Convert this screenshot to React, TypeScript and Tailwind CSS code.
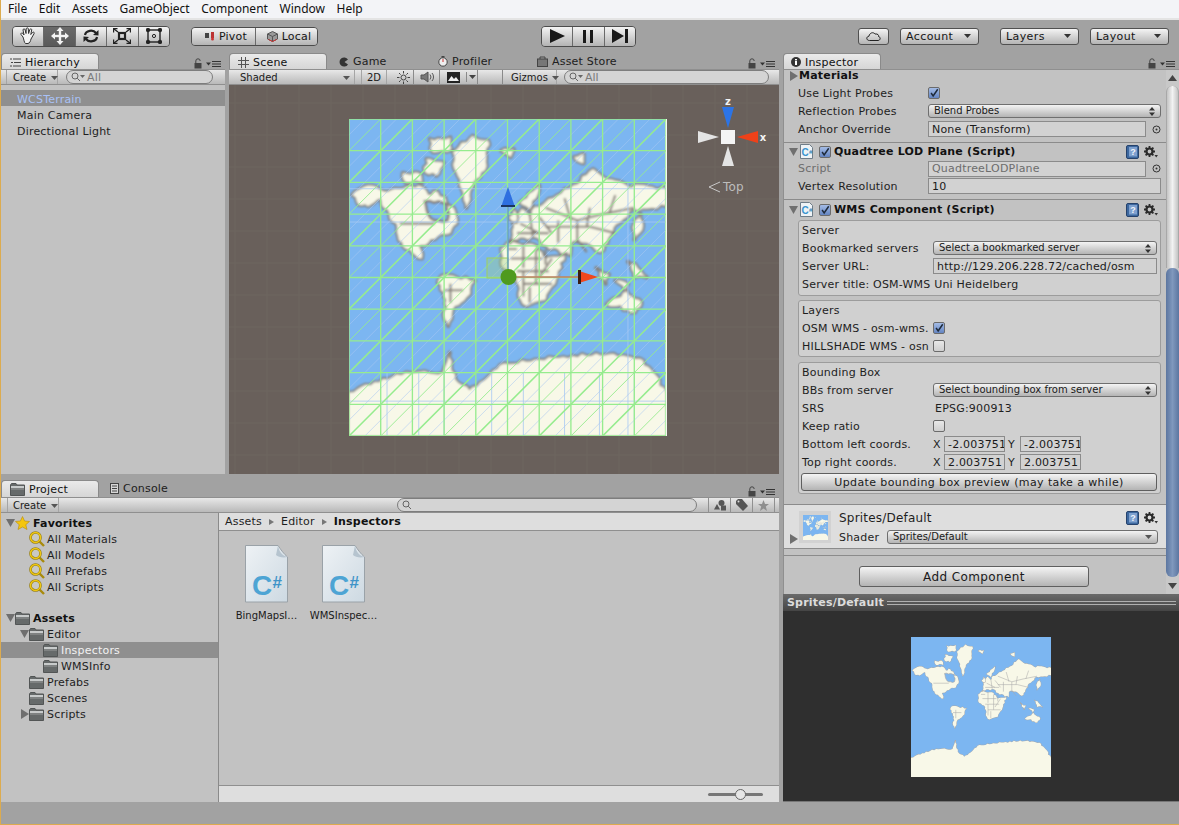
import React from "react";

const BAR = "bg-linear-to-b from-[#e8e8e8] to-[#b9b9b9]";
const BTN = "bg-linear-to-b from-[#f4f4f4] to-[#b4b4b4]";

const RAW_LAND: string[] = [
  "1,24 6,21 12,23 17,22 22,21 25,24 28,23 33,28 34,33 32,36 28,37 25,39 22,40 23,44 21,43 18,41 15.5,37 15,33 11,28 10,25 6,27.5 3,27",
  "32.8,10.5 39,5.3 43.9,6.8 43.4,14.8 39.2,20 37,28 35.5,22 33.9,16.8",
  "25.5,6.3 32,5.8 32.3,9.5 26.5,10.5",
  "24.4,12.6 29.8,13.7 27.6,17.9 24,16.8",
  "17,17 22,17 23,20 18,20",
  "29.2,49.5 33.9,50 39.7,51 37,56.3 33.4,59 31.3,65.3 30.2,63.2 30.7,57 28,51.6",
  "48,41 51,38.5 59,40 62,44 68,43 65,52 62,57 56,59 53.5,56 53,50 50,47.5 48,45",
  "57.6,29 64.4,25 70.7,21 77,15.8 80.2,18.4 87.6,21 100,22 100,27.4 89.7,28.4 85.5,32.6 82.3,36.8 79.2,42 75,39 70.7,38.4 69.7,43 62.3,40 59.2,37.4 53.9,37.4 50.7,39 51.8,32.6 54.4,28.4 57,30.5",
  "53.9,26.5 60,21 59,25 57,28.5",
  "50.5,31 52,28.5 52.8,32.5",
  "81.3,58.4 87.6,54.2 92.3,58 90.2,61 84.4,59",
  "0,86.3 10.7,82 21,80 29.7,80 31.8,73.7 33.4,82 38,85.6 47.6,77.7 60.2,76 78,74 91.7,75.6 96,80 100,86.3 100,100 0,100",
  "90,33 92,30 92.5,35 90,38",
  "78,47 82,49 81,52",
  "84,51 88,52 87,54",
  "71,12 74,11 74,14",
  "48,10 52,9.5 51,12",
  "88,45 91,47 94,50 90,50",
];

function rough(src: string, seed: number): string {
  const pts = src.split(" ").map((p) => p.split(",").map(Number));
  const out: string[] = [];
  pts.forEach((a, i) => {
    const b = pts[(i + 1) % pts.length];
    const dx = b[0] - a[0];
    const dy = b[1] - a[1];
    const len = Math.hypot(dx, dy);
    const n = Math.max(1, Math.ceil(len / 1.5));
    const edge = (a[0] === 100 && b[0] === 100) || (a[0] === 0 && b[0] === 0) || (a[1] === 100 && b[1] === 100);
    for (let k = 0; k < n; k++) {
      const t = k / n;
      const r = Math.sin((i + 1) * 12.9898 + k * 78.233 + seed * 37.7) * 43758.5453;
      const noise = (r - Math.floor(r) - 0.5) * 1.3;
      const off = k === 0 || edge ? 0 : noise;
      out.push((a[0] + dx * t - (dy / len) * off).toFixed(2) + "," + (a[1] + dy * t + (dx / len) * off).toFixed(2));
    }
  });
  return out.join(" ");
}

const LAND = RAW_LAND.map((p, i) => rough(p, i + 1));
const HUDSON = rough("24,26 31,27 31,32 27,32 25,30", 40);

const BORDERS =
  "M51,44 H61 M53,48 H63 M55,52 H64 M55,40 V47 M59,41 V52 M55,48 V56 M62,28 L72,32 L80,30 L90,28 M62,34 H76 M66,32 V39 M72,32 V39 M16,33 H27 M30,54 L36,54 M32,52 V58 M76,34 L84,36 M72,38 L75,42 M54,33 L60,36 M57,30 L58,37 M60,31 L64,36 M53,36 H63 M68,25 L70,32 M50,41 H53 M62,41 V46 M64,44 L60,50 M57,53 V58 M76,28 L75,34 M84,24 L82,30";

function WorldMap({ x = 0, y = 0, size, stroke, outline, blur }: { x?: number; y?: number; size: number; stroke: number; outline: string; blur?: boolean }) {
  return (
    <svg x={x} y={y} width={size} height={size} viewBox="0 0 100 100">
      <rect width="100" height="100" fill="#7cb6f1" />
      <g filter={blur ? "url(#mapBlur)" : undefined}>
        {LAND.map((p, i) => (
          <polygon key={i} points={p} fill="#f8f8e8" stroke={outline} strokeWidth={stroke} strokeLinejoin="round" paintOrder="stroke" />
        ))}
        <polygon points={HUDSON} fill="#7cb6f1" stroke={outline} strokeWidth={stroke * 0.7} />
        <path d={BORDERS} fill="none" stroke={outline} strokeWidth={stroke * 0.55} />
      </g>
    </svg>
  );
}

function Wire({ x, y, size }: { x: number; y: number; size: number }) {
  const rng = Array.from({ length: 11 }, (_, i) => i * 10);
  const fine = Array.from({ length: 20 }, (_, i) => i * 10 + 5);
  const blueV = [12, 22, 30, 45, 55, 68, 79, 90];
  return (
    <svg x={x} y={y} width={size} height={size} viewBox="0 0 100 100" fill="none">
      <g stroke="#a8c8f2" strokeWidth="0.25">
        {blueV.map((v) => (
          <line key={v} x1={v} y1="80" x2={v} y2="100" />
        ))}
        <line x1="0" y1="22" x2="100" y2="22" />
        <line x1="0" y1="32.5" x2="100" y2="32.5" />
        <line x1="0" y1="89" x2="100" y2="89" />
        <line x1="88" y1="20" x2="88" y2="100" />
        {fine.map((k) => (
          <line key={k} x1={Math.max(0, k - 100)} y1={Math.min(100, k)} x2={Math.min(100, k)} y2={Math.max(0, k - 100)} strokeWidth="0.18" />
        ))}
      </g>
      <g stroke="#96ec8e">
        {Array.from({ length: 19 }, (_, i) => (i + 1) * 10).map((k) => (
          <line key={k} x1={Math.max(0, k - 100)} y1={Math.min(100, k)} x2={Math.min(100, k)} y2={Math.max(0, k - 100)} strokeWidth={k % 20 === 0 ? 0.5 : 0.28} />
        ))}
        {rng.map((v) => (
          <g key={v} strokeWidth="0.42">
            <line x1={v} y1="0" x2={v} y2="100" />
            <line x1="0" y1={v} x2="100" y2={v} />
          </g>
        ))}
      </g>
    </svg>
  );
}

function SceneDrawing() {
  const gridV = [6, 38, 70, 102, 134, 166, 198, 230, 262, 294, 326, 358, 390, 422, 454, 486, 518];
  const gridH = [18, 50, 82, 114, 146, 178, 210, 242, 274, 306, 338, 370];
  return (
    <svg width="550" height="389" className="block">
      <defs>
        <filter id="mapBlur" x="-5%" y="-5%" width="110%" height="110%">
          <feGaussianBlur stdDeviation="0.3" />
        </filter>
      </defs>
      <g stroke="#6f6660" strokeWidth="1">
        {gridV.map((v) => (
          <line key={v} x1={v} y1="0" x2={v} y2="389" />
        ))}
        {gridH.map((v) => (
          <line key={v} x1="0" y1={v} x2="550" y2={v} />
        ))}
      </g>
      <WorldMap x={120} y={34} size={317} stroke={1.2} outline="#857f78" blur />
      <rect x="436" y="34" width="2" height="317" fill="#f3f7ee" />
      <Wire x={120} y={34} size={317} />
      <rect x="258" y="173" width="21" height="20" fill="#9fd27a" fillOpacity="0.35" stroke="#9fcf5e" />
      <line x1="279" y1="120" x2="279" y2="192" stroke="#5f8fd0" strokeWidth="1.2" />
      <polygon points="279,102 272,122 286,122" fill="#2e6fe0" />
      <rect x="272" y="120" width="14" height="2" fill="#1c3562" />
      <line x1="279" y1="192" x2="351" y2="192" stroke="#c27e62" strokeWidth="1.4" />
      <polygon points="369,192 350,186 350,198" fill="#f0471e" />
      <rect x="349" y="185" width="3" height="14" fill="#3a1c14" />
      <circle cx="279.5" cy="192" r="8" fill="#4f9a1e" />
      <polygon points="499,43 493,22 505,22" fill="#2c74e6" />
      <polygon points="508,52 529,46 529,58" fill="#ee4119" />
      <polygon points="490,52 469,46 469,58" fill="#e4e4e4" />
      <polygon points="499,61 493,81 505,81" fill="#e4e4e4" />
      <rect x="492" y="45" width="14" height="14" fill="#f4f4f4" />
      <text x="499" y="20" textAnchor="middle" fontSize="10" fontWeight="bold" fill="#f4f4f4" fontFamily="'DejaVu Sans',sans-serif">z</text>
      <text x="534" y="56" textAnchor="middle" fontSize="10" fontWeight="bold" fill="#f4f4f4" fontFamily="'DejaVu Sans',sans-serif">x</text>
      <path d="M491,97 L480,102 L491,107" fill="none" stroke="#c9c9c9" strokeWidth="1" />
      <text x="494" y="102" fontSize="12" dominantBaseline="middle" fill="#bdbdbd" fontFamily="'DejaVu Sans',sans-serif">Top</text>
    </svg>
  );
}

const Arrow = ({ dir = "down", className = "" }: { dir?: "down" | "right"; className?: string }) => (
  <svg width="9" height="10" viewBox="0 0 9 10" className={"shrink-0 " + className}>
    {dir === "down" ? <polygon points="0,1 9,1 4.5,9" fill="#6f6f6f" /> : <polygon points="1,0 9,5 1,10" fill="#6f6f6f" />}
  </svg>
);

const Caret = ({ color = "#333" }: { color?: string }) => (
  <svg width="7" height="4" viewBox="0 0 7 4" className="shrink-0">
    <polygon points="0,0 7,0 3.5,4" fill={color} />
  </svg>
);

const UpDown = () => (
  <svg width="6" height="9" viewBox="0 0 6 9" className="shrink-0">
    <polygon points="3,0 6,3.5 0,3.5" fill="#333" />
    <polygon points="0,5.5 6,5.5 3,9" fill="#333" />
  </svg>
);

function LockMenu() {
  return (
    <div className="ml-auto flex items-center gap-[4px] pr-[4px] pt-[3px]">
      <svg width="8" height="11" viewBox="0 0 8 11">
        <path d="M1.8,5 V3 a2.2,2.2 0 0 1 4.4,0" fill="none" stroke="#444" strokeWidth="1" />
        <rect x="0.5" y="5" width="7" height="5.5" fill="#444" />
      </svg>
      <svg width="15" height="8" viewBox="0 0 15 8">
        <polygon points="0,2.5 5,2.5 2.5,5.5" fill="#333" />
        <path d="M6,1.5 H15 M6,4 H15 M6,6.5 H15" stroke="#333" strokeWidth="1" />
      </svg>
    </div>
  );
}

function Tab({ icon, label, active, w = "w-[98px]", pl = "pl-[8px]", h = "h-[16px] pt-px" }: { icon: React.ReactNode; label: string; active?: boolean; w?: string; pl?: string; h?: string }) {
  return (
    <div className={(active ? "bg-linear-to-b from-[#eaeaea] to-[#d6d6d6] rounded-t-[4px] border-t border-x border-[#8a8a8a] text-[#111]" : "text-[#202020]") + " " + w + " " + pl + " " + h + " flex items-center gap-[4px] shrink-0 text-[11px]"}>
      {icon}
      <span>{label}</span>
    </div>
  );
}

const ListIcon = () => (
  <svg width="11" height="9" viewBox="0 0 11 9">
    <path d="M3,1 H11 M4,4.5 H11 M3,8 H11" stroke="#444" fill="none" />
    <path d="M0,1 H2 M1,4.5 H3 M0,8 H2" stroke="#444" fill="none" />
  </svg>
);
const HashIcon = () => (
  <svg width="11" height="11" viewBox="0 0 11 11">
    <path d="M3.5,0 V11 M7.5,0 V11 M0,3.5 H11 M0,7.5 H11" stroke="#555" fill="none" />
  </svg>
);
const GameIcon = () => (
  <svg width="10" height="10" viewBox="0 0 10 10">
    <path d="M9,2.5 A4.6,4.6 0 1 0 9,7.5 L5.5,5 Z" fill="#333" />
  </svg>
);
const ProfilerIcon = () => (
  <svg width="10" height="11" viewBox="0 0 10 11">
    <circle cx="5" cy="6" r="4.2" fill="#eee" stroke="#444" />
    <path d="M5,6 L5,3" stroke="#c33" />
    <rect x="3.5" y="0" width="3" height="1.6" fill="#444" />
  </svg>
);
const StoreIcon = () => (
  <svg width="11" height="11" viewBox="0 0 11 11">
    <rect x="0.5" y="3" width="10" height="7.5" fill="#777" stroke="#444" />
    <path d="M3,3 V1 H8 V3" fill="none" stroke="#444" />
  </svg>
);
const InfoIcon = () => (
  <svg width="10" height="10" viewBox="0 0 10 10">
    <circle cx="5" cy="5" r="5" fill="#333" />
    <rect x="4" y="4" width="2" height="4" fill="#fff" />
    <rect x="4" y="2" width="2" height="1.4" fill="#fff" />
  </svg>
);
const FolderIcon = () => (
  <svg width="15" height="13" viewBox="0 0 15 13" className="shrink-0">
    <path d="M0.5,2 L1.5,0.5 H6 L7,2 H14.5 V12.5 H0.5 Z" fill="#666a6a" stroke="#525555" />
    <rect x="1" y="3" width="13" height="2" fill="#c8cbcb" />
    <rect x="1" y="5.5" width="13" height="1" fill="#979a9a" />
  </svg>
);
const ConsoleIcon = () => (
  <svg width="9" height="11" viewBox="0 0 9 11">
    <rect x="0.5" y="0.5" width="8" height="10" fill="#d8d8d8" stroke="#444" />
    <path d="M2,3 H7 M2,5.5 H7 M2,8 H7" stroke="#444" />
  </svg>
);
const SearchGlyph = ({ caret = true }: { caret?: boolean }) => (
  <svg width={caret ? 15 : 10} height="10" viewBox={caret ? "0 0 15 10" : "0 0 10 10"} className="shrink-0">
    <circle cx="4" cy="4" r="3" fill="none" stroke="#666" />
    <path d="M6.2,6.2 L9,9" stroke="#666" />
    {caret && <polygon points="9,3 14,3 11.5,6" fill="#666" />}
  </svg>
);
const Star = () => (
  <svg width="15" height="14" viewBox="0 0 15 14" className="shrink-0">
    <polygon points="7.5,0.5 9.6,5 14.5,5.5 10.8,8.7 12,13.5 7.5,11 3,13.5 4.2,8.7 0.5,5.5 5.4,5" fill="#f4c60e" stroke="#b98d08" strokeWidth="0.6" />
  </svg>
);
const Magnifier = () => (
  <svg width="16" height="16" viewBox="0 0 16 16" className="shrink-0">
    <circle cx="6.5" cy="6.5" r="5" fill="#dcdcc8" fillOpacity="0.3" stroke="#8f7a1a" strokeWidth="2.6" />
    <circle cx="6.5" cy="6.5" r="5" fill="none" stroke="#f0c811" strokeWidth="1.5" />
    <path d="M10.5,10.5 L15,15" stroke="#a88a0c" strokeWidth="2.4" />
  </svg>
);

function TreeRow({ depth, arrow, icon, text, selected, bold }: { depth: number; arrow?: "down" | "right"; icon: React.ReactNode; text: string; selected?: boolean; bold?: boolean }) {
  return (
    <div className={"h-[16px] flex items-center " + (selected ? "bg-[#8f8f8f] text-[#f2f2f2] " : "text-[#1e1e1e] ") + (bold ? "font-bold text-[#111]" : "")}>
      <div style={{ width: 5 + depth * 14 }} className="shrink-0" />
      <div className="w-[9px] shrink-0">{arrow && <Arrow dir={arrow} />}</div>
      <div className="w-[15px] shrink-0 flex justify-center">{icon}</div>
      <span className="ml-[3px]">{text}</span>
    </div>
  );
}

function CSharpFile({ label }: { label: string }) {
  return (
    <div className="w-[77px] flex flex-col items-center">
      <svg width="43" height="58" viewBox="0 0 43 58">
        <defs>
          <linearGradient id="pg" x1="0" y1="0" x2="1" y2="1">
            <stop offset="0" stopColor="#eef2f5" />
            <stop offset="1" stopColor="#cdd9e2" />
          </linearGradient>
        </defs>
        <path d="M0.5,0.5 H33 C36,5 39,9 42.5,12 V57 H0.5 Z" fill="url(#pg)" stroke="#9aa2a8" />
        <path d="M33,0.5 C34,6 36,10 42.5,12 C38,13 33,12 31,10 Z" fill="#b6c4cf" />
        <text x="7" y="50" fontFamily="'Liberation Sans',sans-serif" fontWeight="bold" fill="#4da4d4">
          <tspan fontSize="28">C</tspan>
          <tspan fontSize="17" dy="-7" fill="#3f94c8">#</tspan>
        </text>
      </svg>
      <span className="mt-[6px] text-[10px] leading-[14px] tracking-normal whitespace-nowrap text-[#1a1a1a]">{label}</span>
    </div>
  );
}

const Check = ({ on, className = "" }: { on?: boolean; className?: string }) => (
  <div className={"w-[12px] h-[12px] rounded-[2px] border border-[#6b6b6b] shrink-0 flex items-center justify-center " + (on ? "bg-linear-to-b from-[#a4bce6] to-[#6485c2] " : "bg-linear-to-b from-[#e8e8e8] to-[#cfcfcf] ") + className}>
    {on && (
      <svg width="12" height="12" viewBox="0 0 12 12">
        <path d="M2.5,6 L5,9.5 L10.5,1.5" fill="none" stroke="#1e2a3a" strokeWidth="1.8" />
      </svg>
    )}
  </div>
);

const Row = ({ label, w = "w-[130px]", dim, children, h = "h-[18px]" }: { label: string; w?: string; dim?: boolean; children?: React.ReactNode; h?: string }) => (
  <div className={h + " flex items-center"}>
    <span className={w + " shrink-0 whitespace-nowrap " + (dim ? "text-[#6d6d6d]" : "text-[#1e1e1e]")}>{label}</span>
    {children}
  </div>
);

const BRow = (p: { label: string; children?: React.ReactNode }) => <Row {...p} w="w-[131px]" />;

const Dropdown = ({ text, icon = <UpDown />, cls = "flex-1" }: { text: string; icon?: React.ReactNode; cls?: string }) => (
  <div className={BTN + " " + cls + " h-[14px] rounded-[3px] border border-[#6f6f6f] flex items-center justify-between pl-[5px] pr-[5px] text-[10px] tracking-normal text-[#1a1a1a]"}>
    <span>{text}</span>
    {icon}
  </div>
);

const Field = ({ text, cls = "flex-1", dim }: { text?: string; cls?: string; dim?: boolean }) => (
  <div className={cls + " h-[16px] bg-[#d2d2d2] border border-[#8b8b8b] flex items-center pl-[3px] overflow-hidden whitespace-nowrap " + (dim ? "text-[#6d6d6d]" : "text-[#1a1a1a]")}>{text}</div>
);

const Picker = () => (
  <svg width="9" height="9" viewBox="0 0 9 9" className="shrink-0 ml-[6px]">
    <circle cx="4.5" cy="4.5" r="3.5" fill="none" stroke="#333" />
    <circle cx="4.5" cy="4.5" r="1" fill="#333" />
  </svg>
);

const CsBadge = () => (
  <svg width="13" height="15" viewBox="0 0 13 15" className="shrink-0">
    <path d="M0.5,0.5 H9.5 L12.5,3.5 V14.5 H0.5 Z" fill="#eef3f6" stroke="#6f7d88" />
    <text x="1.5" y="11.5" fontFamily="'Liberation Sans',sans-serif" fontWeight="bold" fill="#3a94cf">
      <tspan fontSize="10">C</tspan>
      <tspan fontSize="6" dy="-1.5" fill="#2f7fb4">#</tspan>
    </text>
  </svg>
);

const Help = () => (
  <svg width="13" height="14" viewBox="0 0 13 14" className="shrink-0">
    <rect x="0.5" y="0.5" width="12" height="13" rx="1.5" fill="#3d689f" stroke="#26426c" />
    <rect x="3" y="2" width="8" height="9.5" fill="#7fa1cf" />
    <text x="7" y="10" textAnchor="middle" fontFamily="'Liberation Sans',sans-serif" fontSize="9" fontWeight="bold" fill="#f2f6fb">?</text>
  </svg>
);

const Gear = () => (
  <svg width="14" height="12" viewBox="0 0 14 12" className="shrink-0">
    <circle cx="5.5" cy="5.5" r="3" fill="none" stroke="#2a2a2a" strokeWidth="2.2" />
    <path d="M5.5,0 V2 M5.5,9 V11 M0,5.5 H2 M9,5.5 H11 M1.6,1.6 L3,3 M8,8 L9.4,9.4 M1.6,9.4 L3,8 M8,3 L9.4,1.6" stroke="#2a2a2a" strokeWidth="1.8" />
    <polygon points="10.5,9 14,9 12.2,11.5" fill="#333" />
  </svg>
);

const CompHeader = ({ title, h }: { title: string; h: string }) => (
  <div className={h + " flex items-center pl-[5px] pr-[8px]"}>
    <Arrow />
    <div className="ml-[2px] flex"><CsBadge /></div>
    <Check on className="ml-[6px]" />
    <span className="ml-[3px] font-bold text-[#111] whitespace-nowrap">{title}</span>
    <div className="ml-auto flex items-center gap-[5px]">
      <Help />
      <Gear />
    </div>
  </div>
);

const Box = ({ mt, children }: { mt: string; children: React.ReactNode }) => (
  <div className={mt + " ml-[14px] mr-[5px] border border-[#9c9c9c] rounded-[3px] bg-[#d0d0d0] pl-[3px] pr-[3px]"}>{children}</div>
);

const Sep = () => <div className="h-px bg-[#8b8b8b] shrink-0" />;

function ToolIcon({ name }: { name: string }) {
  if (name === "hand")
    return (
      <svg width="18" height="18" viewBox="0 0 18 18" fill="#f4f4f4" stroke="#333" strokeWidth="1">
        <path d="M4,10 L2,7.5 C1.5,6 3,5.5 4,6.5 L5,8 L4,3 C4,1.5 6,1.5 6.2,3 L7,6.5 L7.2,1.8 C7.4,0.5 9.2,0.5 9.3,1.8 L9.6,6.5 L10.8,2.6 C11.2,1.4 13,1.8 12.7,3 L11.8,7.5 L13.5,5.5 C14.5,4.5 15.8,5.5 15,6.8 L12,12 C11.5,14 11,16 9,16.5 L6.5,16.5 C5,15.5 5,12.5 4,10 Z" />
      </svg>
    );
  if (name === "move")
    return (
      <svg width="18" height="18" viewBox="0 0 18 18" fill="#f4f4f4">
        <polygon points="9,0 12.5,4 5.5,4" />
        <polygon points="9,18 12.5,14 5.5,14" />
        <polygon points="0,9 4,5.5 4,12.5" />
        <polygon points="18,9 14,5.5 14,12.5" />
        <rect x="7.8" y="3" width="2.4" height="12" />
        <rect x="3" y="7.8" width="12" height="2.4" />
      </svg>
    );
  if (name === "rotate")
    return (
      <svg width="16" height="14" viewBox="0 0 16 14" fill="none" stroke="#222" strokeWidth="2.2">
        <path d="M2,6 A6,5 0 0 1 13,4" />
        <path d="M14,8 A6,5 0 0 1 3,10" />
        <polygon points="15.5,1 15.5,6.5 10,6" fill="#222" stroke="none" />
        <polygon points="0.5,13 0.5,7.5 6,8" fill="#222" stroke="none" />
      </svg>
    );
  if (name === "scale")
    return (
      <svg width="18" height="16" viewBox="0 0 18 16" fill="none" stroke="#222" strokeWidth="1.4">
        <rect x="6" y="5" width="6" height="6" strokeWidth="2.2" />
        <path d="M1,1 L5,4 M17,1 L13,4 M1,15 L5,12 M17,15 L13,12" />
        <path d="M0.5,4.5 V0.5 H4.5 M13.5,0.5 H17.5 V4.5 M0.5,11.5 V15.5 H4.5 M13.5,15.5 H17.5 V11.5" />
      </svg>
    );
  return (
    <svg width="16" height="16" viewBox="0 0 16 16" fill="none" stroke="#222">
      <rect x="2" y="2" width="12" height="12" strokeWidth="1.4" />
      <circle cx="8" cy="8" r="1.6" />
      <circle cx="2" cy="2" r="1.8" fill="#222" />
      <circle cx="14" cy="2" r="1.8" fill="#222" />
      <circle cx="2" cy="14" r="1.8" fill="#222" />
      <circle cx="14" cy="14" r="1.8" fill="#222" />
    </svg>
  );
}

const TopBtn = ({ children, cls }: { children: React.ReactNode; cls: string }) => (
  <div className={BTN + " " + cls + " h-[17px] rounded-[3px] border border-[#505050] flex items-center"}>{children}</div>
);

function Toolbar() {
  return (
    <div className="h-[32px] flex items-center shrink-0">
      <div className="ml-[11px] flex h-[21px] w-[158px] rounded-[4px] border border-[#4c4c4c] overflow-hidden">
        {["hand", "move", "rotate", "scale", "rect"].map((n, i) => (
          <div key={n} className={(n === "move" ? "bg-linear-to-b from-[#6a6a6a] to-[#5a5a5a] " : BTN + " ") + (i < 4 ? "border-r border-[#6a6a6a] " : "") + "flex-1 flex items-center justify-center"}>
            <ToolIcon name={n} />
          </div>
        ))}
      </div>
      <div className="ml-[21px] flex h-[19px] w-[127px] rounded-[4px] border border-[#4c4c4c] overflow-hidden text-[11px] text-[#161616]">
        <div className={BTN + " w-[64px] pl-[5px] border-r border-[#6a6a6a] flex items-center justify-center gap-[4px]"}>
          <svg width="10" height="10" viewBox="0 0 10 10"><rect x="0" y="2" width="4" height="5" fill="#444" /><rect x="6" y="1" width="3" height="6" fill="#b33" /><circle cx="7.5" cy="8" r="1.5" fill="#c33" /></svg>
          <span>Pivot</span>
        </div>
        <div className={BTN + " flex-1 pl-[5px] flex items-center justify-center gap-[4px]"}>
          <svg width="11" height="11" viewBox="0 0 11 11"><polygon points="5.5,0.5 10.5,3 10.5,8 5.5,10.5 0.5,8 0.5,3" fill="#999" stroke="#555" /><path d="M0.5,3 L5.5,5.5 L10.5,3 M5.5,5.5 V10.5" stroke="#555" fill="none" /><path d="M1.5,8.5 L5.5,10.5 L9.5,8.5" stroke="#c33" fill="none" /></svg>
          <span>Local</span>
        </div>
      </div>
      <div className="ml-[223px] flex h-[21px] w-[95px] rounded-[4px] border border-[#4c4c4c] overflow-hidden">
        <div className={BTN + " flex-1 border-r border-[#6a6a6a] flex items-center justify-center"}>
          <svg width="15" height="14" viewBox="0 0 15 14"><polygon points="0,0 15,7 0,14" fill="#1a1a1a" /></svg>
        </div>
        <div className={BTN + " flex-1 border-r border-[#6a6a6a] flex items-center justify-center"}>
          <svg width="10" height="13" viewBox="0 0 10 13"><rect width="3" height="13" fill="#1a1a1a" /><rect x="7" width="3" height="13" fill="#1a1a1a" /></svg>
        </div>
        <div className={BTN + " flex-1 flex items-center justify-center"}>
          <svg width="16" height="14" viewBox="0 0 16 14"><polygon points="0,0 12,7 0,14" fill="#1a1a1a" /><rect x="13" width="3" height="14" fill="#1a1a1a" /></svg>
        </div>
      </div>
      <TopBtn cls="ml-[222px] w-[31px] justify-center">
        <svg width="15" height="10" viewBox="0 0 15 10"><path d="M3.5,9.5 C0,9.5 0,5.5 3,5.2 C3.5,2 7,0.5 9,3 C12,2.5 13,4.5 12.5,5.5 C15,6 14.5,9.5 12,9.5 Z" fill="none" stroke="#222" /></svg>
      </TopBtn>
      <TopBtn cls="ml-[11px] w-[79px] justify-between pl-[5px] pr-[7px] text-[11px] tracking-[0.4px] text-[#161616]"><span>Account</span><Caret /></TopBtn>
      <TopBtn cls="ml-[21px] w-[79px] justify-between pl-[5px] pr-[7px] text-[11px] tracking-[0.4px] text-[#161616]"><span>Layers</span><Caret /></TopBtn>
      <TopBtn cls="ml-[11px] w-[79px] justify-between pl-[5px] pr-[7px] text-[11px] tracking-[0.4px] text-[#161616]"><span>Layout</span><Caret /></TopBtn>
    </div>
  );
}

const V = () => <div className="w-px self-stretch bg-[#8a8a8a] shrink-0" />;

function SearchBox({ text, cls }: { text?: string; cls: string }) {
  return (
    <div className={cls + " h-[14px] rounded-full border border-[#7d7d7d] bg-[#d4d4d4] flex items-center pl-[4px] gap-[1px] text-[11px] text-[#7a7a7a]"}>
      <SearchGlyph caret={!!text} />
      <span className="leading-none">{text}</span>
    </div>
  );
}

function Hierarchy() {
  return (
    <div className="w-[224px] flex flex-col shrink-0">
      <div className="h-[17px] flex items-end shrink-0">
        <Tab active icon={<ListIcon />} label="Hierarchy" />
        <LockMenu />
      </div>
      <div className={BAR + " h-[16px] flex items-center shrink-0 border-y border-[#8f8f8f]"}>
        <div className="ml-[5px] w-[52px] pl-[6px] pt-px flex items-center gap-[5px] text-[10px] tracking-normal text-[#1a1a1a] border-x border-[#a5a5a5] h-full"><span>Create</span><Caret color="#555" /></div>
        <SearchBox text="All" cls="ml-[8px] w-[147px]" />
      </div>
      <div className="flex-1 bg-[#c2c2c2] pt-[5px]">
        <div className="h-[16px] bg-[#8f8f8f] pt-[2px] flex items-center pl-[16px] text-[#a9c2f7]">WCSTerrain</div>
        <div className="h-[16px] mt-px flex items-center pl-[16px] text-[#1e1e1e]">Main Camera</div>
        <div className="h-[16px] flex items-center pl-[16px] text-[#1e1e1e]">Directional Light</div>
      </div>
    </div>
  );
}

function SceneTools() {
  return (
    <div className={BAR + " h-[16px] flex items-center shrink-0 border-y border-[#8f8f8f] text-[10px] tracking-normal text-[#1a1a1a]"}>
      <div className="w-[126px] h-full pt-px flex items-center justify-between pl-[11px] pr-[4px] border-r border-[#a5a5a5]"><span>Shaded</span><Caret color="#555" /></div>
      <div className="ml-[6px] w-[26px] h-full pt-px flex items-center justify-center border-x border-[#a5a5a5]">2D</div>
      <div className="ml-[6px] w-[20px] flex justify-center h-full items-center">
        <svg width="13" height="13" viewBox="0 0 13 13" fill="none" stroke="#444"><circle cx="6.5" cy="6.5" r="2.5" /><path d="M6.5,0 V2.5 M6.5,10.5 V13 M0,6.5 H2.5 M10.5,6.5 H13 M2,2 L3.6,3.6 M9.4,9.4 L11,11 M2,11 L3.6,9.4 M9.4,3.6 L11,2" /></svg>
      </div>
      <V />
      <div className="w-[25px] flex justify-center items-center h-full">
        <svg width="14" height="12" viewBox="0 0 14 12" fill="#777" stroke="#555"><polygon points="1,4 4,4 8,1 8,11 4,8 1,8" /><path d="M10,3.5 A4,4 0 0 1 10,8.5 M12,2 A6,6 0 0 1 12,10" fill="none" /></svg>
      </div>
      <V />
      <div className="w-[26px] flex justify-center items-center h-full">
        <svg width="13" height="11" viewBox="0 0 13 11"><rect width="13" height="11" fill="#222" /><polygon points="1,9 4.5,4 7,7 9,5 12,9" fill="#eee" /></svg>
      </div>
      <div className="w-px h-[10px] bg-[#8a8a8a]" />
      <div className="w-[10px] flex justify-center"><Caret color="#444" /></div>
      <V />
      <div className="w-[24px]" />
      <V />
      <div className="w-[54px] h-full pt-px flex items-center gap-[4px] pl-[8px] border-r border-[#a5a5a5]"><span>Gizmos</span><Caret color="#555" /></div>
      <SearchBox text="All" cls="ml-[7px] w-[205px]" />
    </div>
  );
}

function SceneView() {
  return (
    <div className="w-[550px] flex flex-col">
      <div className="h-[17px] flex items-end shrink-0">
        <Tab active icon={<HashIcon />} label="Scene" />
        <Tab icon={<GameIcon />} label="Game" w="w-[100px]" pl="pl-[12px]" />
        <Tab icon={<ProfilerIcon />} label="Profiler" w="w-[99px]" pl="pl-[11px]" />
        <Tab icon={<StoreIcon />} label="Asset Store" w="w-[130px]" pl="pl-[11px]" />
        <LockMenu />
      </div>
      <SceneTools />
      <div className="flex-1 bg-[#69605b] overflow-hidden">
        <SceneDrawing />
      </div>
    </div>
  );
}

function Project() {
  return (
    <div className="h-[324px] flex flex-col shrink-0">
      <div className="h-[19px] flex items-end shrink-0">
        <Tab active icon={<FolderIcon />} label="Project" h="h-[17px]" />
        <Tab icon={<ConsoleIcon />} label="Console" w="w-[100px]" pl="pl-[11px]" h="h-[17px]" />
        <LockMenu />
      </div>
      <div className={BAR + " h-[16px] flex items-center shrink-0 border-y border-[#8f8f8f] text-[10px] tracking-normal text-[#1a1a1a]"}>
        <div className="w-[52px] h-full pl-[5px] pt-px ml-[6px] flex items-center gap-[5px] border-x border-[#a5a5a5]"><span>Create</span><Caret color="#555" /></div>
        <SearchBox cls="ml-[338px] w-[300px]" />
        <div className="ml-[11px] w-px h-full bg-[#909090]" />
        <div className="w-[21px] flex justify-center">
          <svg width="12" height="11" viewBox="0 0 12 11"><circle cx="7.5" cy="3" r="3" fill="#555" /><polygon points="0,9.5 3,4 6,9.5" fill="#555" /><rect x="7" y="5.5" width="5" height="5" fill="#555" /></svg>
        </div>
        <div className="w-px h-full bg-[#909090]" />
        <div className="w-[21px] flex justify-center">
          <svg width="12" height="12" viewBox="0 0 12 12"><polygon points="0,2 2,0 6,0 12,7 7,12 0,5" fill="#555" /><circle cx="2.5" cy="2.5" r="1" fill="#ddd" /></svg>
        </div>
        <div className="w-px h-full bg-[#909090]" />
        <div className="w-[21px] flex justify-center">
          <svg width="11" height="11" viewBox="0 0 11 11"><polygon points="5.5,0 7,4 11,4 7.8,6.6 9,11 5.5,8.4 2,11 3.2,6.6 0,4 4,4" fill="#8e8e8e" /></svg>
        </div>
        <div className="w-px h-full bg-[#909090]" />
      </div>
      <div className="flex-1 flex min-h-0">
        <div className="w-[218px] bg-[#c2c2c2] pt-[2px] border-r border-[#8a8a8a]">
          <TreeRow depth={0} arrow="down" icon={<Star />} text="Favorites" bold />
          <TreeRow depth={1} icon={<Magnifier />} text="All Materials" />
          <TreeRow depth={1} icon={<Magnifier />} text="All Models" />
          <TreeRow depth={1} icon={<Magnifier />} text="All Prefabs" />
          <TreeRow depth={1} icon={<Magnifier />} text="All Scripts" />
          <div className="h-[15px]" />
          <TreeRow depth={0} arrow="down" icon={<FolderIcon />} text="Assets" bold />
          <TreeRow depth={1} arrow="down" icon={<FolderIcon />} text="Editor" />
          <TreeRow depth={2} icon={<FolderIcon />} text="Inspectors" selected />
          <TreeRow depth={2} icon={<FolderIcon />} text="WMSInfo" />
          <TreeRow depth={1} icon={<FolderIcon />} text="Prefabs" />
          <TreeRow depth={1} icon={<FolderIcon />} text="Scenes" />
          <TreeRow depth={1} arrow="right" icon={<FolderIcon />} text="Scripts" />
        </div>
        <div className="flex-1 flex flex-col">
          <div className="h-[18px] bg-[#dedede] border-b border-[#8f8f8f] flex items-center pl-[6px] text-[#1e1e1e] gap-[7px]">
            <span>Assets</span>
            <svg width="5" height="6" viewBox="0 0 5 6"><polygon points="0,0 5,3 0,6" fill="#777" /></svg>
            <span>Editor</span>
            <svg width="5" height="6" viewBox="0 0 5 6"><polygon points="0,0 5,3 0,6" fill="#777" /></svg>
            <span className="font-bold text-[#111]">Inspectors</span>
          </div>
          <div className="flex-1 bg-[#c2c2c2] pl-[9px] pt-[14px] flex items-start">
            <CSharpFile label="BingMapsI…" />
            <CSharpFile label="WMSInspec…" />
          </div>
          <div className="h-[17px] bg-[#dedede] border-t border-[#8f8f8f] flex items-center justify-end pr-[16px]">
            <div className="w-[55px] h-[3px] bg-[#777] rounded-full flex items-center pl-[27px]">
              <div className="w-[11px] h-[11px] shrink-0 rounded-full bg-[#e6e6e6] border border-[#666]" />
            </div>
          </div>
        </div>
      </div>
    </div>
  );
}

function Scrollbar() {
  return (
    <div className="w-[13px] shrink-0 flex flex-col items-center bg-[#c8c8c8]">
      <div className="h-[16px] flex items-center justify-center">
        <svg width="9" height="6" viewBox="0 0 9 6"><polygon points="4.5,0 9,6 0,6" fill="#444" /></svg>
      </div>
      <div className="w-full h-[182px] rounded-t-[6px] bg-linear-to-r from-[#c4c4c4] via-[#f2f2f2] to-[#c4c4c4] border-x border-[#a8a8a8]" />
      <div className="w-full flex-1 rounded-[6px] bg-linear-to-r from-[#5c76a0] via-[#8098bd] to-[#5c76a0]" />
      <div className="h-[17px] flex items-center justify-center">
        <svg width="9" height="6" viewBox="0 0 9 6"><polygon points="0,0 9,0 4.5,6" fill="#444" /></svg>
      </div>
    </div>
  );
}

function InspectorBody() {
  return (
    <div className="flex-1 min-w-0 flex flex-col text-[#1e1e1e]">
      <div className="h-[14px] pb-[3px] flex items-center pl-[5px]">
        <Arrow dir="right" />
        <span className="ml-[1px] font-bold text-[#111]">Materials</span>
      </div>
      <div className="pl-[14px] pr-[5px]">
        <Row label="Use Light Probes"><Check on /></Row>
        <Row label="Reflection Probes"><Dropdown text="Blend Probes" /></Row>
        <Row label="Anchor Override"><Field text="None (Transform)" /><Picker /></Row>
      </div>
      <div className="h-[4px]" />
      <Sep />
      <CompHeader title="Quadtree LOD Plane (Script)" h="h-[17px]" />
      <div className="pl-[14px] pr-[5px]">
        <Row label="Script" dim h="h-[17px]">
          <Field dim cls="flex-1" text="QuadtreeLODPlane" />
          <Picker />
        </Row>
        <Row label="Vertex Resolution"><Field text="10" /></Row>
      </div>
      <div className="h-[4px]" />
      <Sep />
      <CompHeader title="WMS Component (Script)" h="h-[19px]" />
      <Box mt="mt-[1px]">
        <BRow label="Server" />
        <BRow label="Bookmarked servers"><Dropdown text="Select a bookmarked server" /></BRow>
        <BRow label="Server URL:"><Field text="http://129.206.228.72/cached/osm" /></BRow>
        <Row label="Server title: OSM-WMS Uni Heidelberg" w="w-[300px]" />
        <div className="h-[2px]" />
      </Box>
      <Box mt="mt-[4px]">
        <BRow label="Layers" />
        <BRow label="OSM WMS - osm-wms."><Check on /></BRow>
        <BRow label="HILLSHADE WMS - osn"><Check /></BRow>
        <div className="h-[1px]" />
      </Box>
      <Box mt="mt-[5px]">
        <BRow label="Bounding Box" />
        <BRow label="BBs from server"><Dropdown text="Select bounding box from server" /></BRow>
        <BRow label="SRS"><span className="pl-[2px] text-[11px]">EPSG:900913</span></BRow>
        <BRow label="Keep ratio"><Check /></BRow>
        <BRow label="Bottom left coords.">
          <span className="w-[11px]">X</span><Field text="-2.003751" cls="w-[61px]" />
          <span className="w-[12px] ml-[3px]">Y</span><Field text="-2.003751" cls="w-[61px]" />
        </BRow>
        <BRow label="Top right coords.">
          <span className="w-[11px]">X</span><Field text="2.003751" cls="w-[61px]" />
          <span className="w-[12px] ml-[3px]">Y</span><Field text="2.003751" cls="w-[61px]" />
        </BRow>
        <div className={BTN + " mt-[2px] mb-[2px] -ml-[1px] h-[18px] rounded-[3px] border border-[#5f5f5f] flex items-center justify-center text-[#1a1a1a] tracking-[0.4px]"}>Update bounding box preview (may take a while)</div>
      </Box>
      <div className="h-[10px]" />
      <Sep />
      <div className="h-[43px] bg-[#dedede] flex items-end pl-[5px] pr-[8px]">
        <Arrow dir="right" className="mb-[4px]" />
        <div className="w-[32px] h-[32px] bg-[#d2d2d2] ml-[1px] mb-[5px] flex items-center justify-center">
          <svg width="25" height="25"><WorldMap size={25} stroke={0.8} outline="#a9a9a9" /></svg>
        </div>
        <div className="flex-1 ml-[8px] flex flex-col self-start pt-[5px]">
          <div className="flex items-center h-[15px] text-[12px]">
            <span>Sprites/Default</span>
            <div className="ml-auto flex items-center gap-[5px]"><Help /><Gear /></div>
          </div>
          <div className="flex items-center mt-[5px]">
            <span className="w-[48px]">Shader</span>
            <Dropdown text="Sprites/Default" icon={<Caret color="#555" />} />
          </div>
        </div>
      </div>
      <Sep />
      <div className="h-[6px] shrink-0" />
      <Sep />
      <div className="flex-1 flex justify-center pt-[10px] pr-[2px]">
        <div className={BTN + " w-[230px] h-[21px] rounded-[3px] border border-[#5f5f5f] flex items-center justify-center text-[12px] tracking-[0.4px] text-[#1a1a1a]"}>Add Component</div>
      </div>
    </div>
  );
}

function Inspector() {
  return (
    <div className="flex-1 flex flex-col min-w-0">
      <div className="h-[17px] flex items-end shrink-0">
        <Tab active icon={<InfoIcon />} label="Inspector" pl="pl-[7px]" />
        <LockMenu />
      </div>
      <div className="h-[525px] flex bg-[#c2c2c2] border-t border-l border-[#8f8f8f] shrink-0">
        <InspectorBody />
        <Scrollbar />
      </div>
      <div className="h-[17px] bg-linear-to-b from-[#6a6a6a] to-[#454545] flex items-center pl-[4px] pr-[3px] gap-[3px] shrink-0">
        <span className="font-bold text-[#dcdcdc] whitespace-nowrap">Sprites/Default</span>
        <div className="flex-1 h-[4px] border-y border-[#b0b0b0]" />
      </div>
      <div className="flex-1 bg-[#2f2f2f] flex justify-center pt-[26px] border-b border-[#777]">
        <svg width="140" height="141" className="block">
          <WorldMap size={140} stroke={0.7} outline="#a8a8a8" />
        </svg>
      </div>
    </div>
  );
}

export default function App() {
  return (
    <div className="w-[1179px] h-[825px] flex flex-col overflow-hidden bg-[#a2a2a2] border-l border-b border-[#dcab4f] font-['DejaVu_Sans',sans-serif] text-[11px] leading-none tracking-[0.2px]">
      <div className="h-[18px] bg-[#f3f4f7] flex items-center pl-[7px] gap-[11.6px] text-[12px] tracking-normal text-[#111] font-['Noto_Sans',sans-serif] shrink-0">
        {["File", "Edit", "Assets", "GameObject", "Component", "Window", "Help"].map((m) => (
          <span key={m}>{m}</span>
        ))}
      </div>
      <div className="h-[2px] bg-[#e4e4e4] shrink-0" />
      <Toolbar />
      <div className="h-[750px] flex gap-[4px] shrink-0">
        <div className="w-[778px] flex flex-col gap-[4px] shrink-0">
          <div className="h-[422px] flex gap-[4px] shrink-0">
            <Hierarchy />
            <SceneView />
          </div>
          <Project />
        </div>
        <Inspector />
      </div>
    </div>
  );
}
